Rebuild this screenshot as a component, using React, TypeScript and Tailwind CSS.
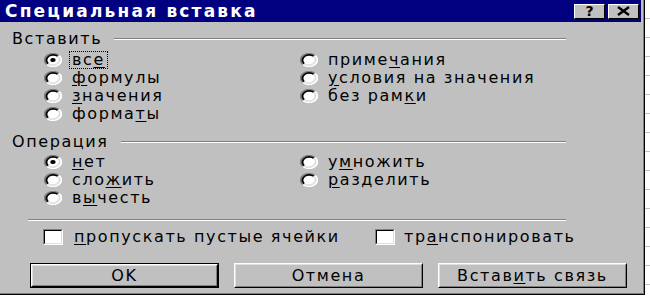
import React from "react";

const font = { fontFamily: '"DejaVu Sans", "Liberation Sans", sans-serif' };

function Radio({ checked }: { checked?: boolean }) {
  return (
    <svg width="18" height="14" viewBox="0 0 12 12" preserveAspectRatio="none" className="shrink-0">
      <circle cx="6" cy="6" r="5" fill="#fff" />
      <path d="M2.11 9.89 A5.5 5.5 0 0 1 9.89 2.11" fill="none" stroke="#808080" strokeWidth="1.3" />
      <path d="M2.82 9.18 A4.5 4.5 0 0 1 9.18 2.82" fill="none" stroke="#000" strokeWidth="1.3" />
      <path d="M9.89 2.11 A5.5 5.5 0 0 1 2.11 9.89" fill="none" stroke="#fff" strokeWidth="1.3" />
      <path d="M9.18 2.82 A4.5 4.5 0 0 1 2.82 9.18" fill="none" stroke="#dfdfdf" strokeWidth="1.3" />
      {checked && <circle cx="6" cy="6" r="1.8" fill="#000" />}
    </svg>
  );
}

function Label({ pre, key_, post, focus }: { pre: string; key_: string; post: string; focus?: boolean }) {
  return (
    <span
      className={`px-[2px] leading-[16px] border ${
        focus ? "border-dotted border-black" : "border-transparent"
      }`}
    >
      {pre}
      <u className="underline-offset-2">{key_}</u>
      {post}
    </span>
  );
}

type Opt = { pre: string; k: string; post: string; checked?: boolean; focus?: boolean };

function RadioRow({ o }: { o: Opt }) {
  return (
    <div className="h-[18px] flex items-center gap-[7px]">
      <Radio checked={o.checked} />
      <Label pre={o.pre} key_={o.k} post={o.post} focus={o.focus} />
    </div>
  );
}

function GroupHeader({ title }: { title: string }) {
  return (
    <div className="h-[16px] flex items-center pl-[12px] w-[566px]">
      <span className="leading-[16px]">{title}</span>
      <div className="flex-1 ml-[12px] border-t border-t-[#808080] border-b border-b-white" />
    </div>
  );
}

function Checkbox() {
  return (
    <div className="w-[20px] h-[16px] border-t border-l border-[#808080] border-b border-r border-b-white border-r-white shrink-0">
      <div className="w-full h-full bg-white border-t border-l border-black border-b border-r border-b-[#dfdfdf] border-r-[#dfdfdf]" />
    </div>
  );
}

function Button({ children, def }: { children: React.ReactNode; def?: boolean }) {
  return (
    <div className={`w-[189px] h-[25px] ${def ? "border border-black" : ""}`}>
      <div className="w-full h-full border-t border-l border-white border-b border-r border-b-black border-r-black">
        <div className="w-full h-full border-t border-l border-[#dfdfdf] border-b border-r border-b-[#808080] border-r-[#808080] flex items-center justify-center leading-[16px]">
          {children}
        </div>
      </div>
    </div>
  );
}

function TitleButton({ children }: { children: React.ReactNode }) {
  return (
    <div className="w-[31px] h-[15px] bg-[#c0c0c0] border-t border-l border-white border-b border-r border-b-black border-r-black flex items-center justify-center">
      {children}
    </div>
  );
}

const paste: Opt[][] = [
  [
    { pre: "вс", k: "е", post: "", checked: true, focus: true },
    { pre: "", k: "ф", post: "ормулы" },
    { pre: "", k: "з", post: "начения" },
    { pre: "форма", k: "т", post: "ы" },
  ],
  [
    { pre: "приме", k: "ч", post: "ания" },
    { pre: "", k: "у", post: "словия на значения" },
    { pre: "без рам", k: "к", post: "и" },
  ],
];

const ops: Opt[][] = [
  [
    { pre: "", k: "н", post: "ет", checked: true },
    { pre: "сло", k: "ж", post: "ить" },
    { pre: "в", k: "ы", post: "честь" },
  ],
  [
    { pre: "у", k: "м", post: "ножить" },
    { pre: "", k: "р", post: "азделить" },
  ],
];

function RadioGrid({ cols }: { cols: Opt[][] }) {
  return (
    <div className="flex pl-[44px]">
      <div className="w-[256px] flex flex-col">
        {cols[0].map((o) => (
          <RadioRow key={o.pre + o.k + o.post} o={o} />
        ))}
      </div>
      <div className="flex flex-col">
        {cols[1].map((o) => (
          <RadioRow key={o.pre + o.k + o.post} o={o} />
        ))}
      </div>
    </div>
  );
}

export default function App() {
  return (
    <div
      className="w-[650px] h-[299px] bg-white flex items-start overflow-hidden text-black text-[16px] tracking-[1.6px]"
      style={font}
    >
      {/* dialog */}
      <div className="w-[645px] h-[295px] border-r border-b border-black shrink-0">
        <div className="w-full h-full bg-[#c0c0c0] border-r border-b border-[#808080] pr-[2px] flex flex-col">
          {/* title bar */}
          <div className="h-[22px] bg-[#000080] flex items-center justify-between pr-[2px]">
            <span className="text-white font-bold text-[17px] tracking-[2.2px] pl-[5px] leading-[20px]">
              Специальная вставка
            </span>
            <div className="flex gap-[3px]">
              <TitleButton>
                <span className="font-bold text-[14px] leading-none tracking-normal">?</span>
              </TitleButton>
              <TitleButton>
                <svg width="15" height="10" viewBox="0 0 15 10">
                  <path d="M2 1 L13 9 M13 1 L2 9" stroke="#000" strokeWidth="2.4" />
                </svg>
              </TitleButton>
            </div>
          </div>

          <div className="mt-[9px]">
            <GroupHeader title="Вставить" />
          </div>
          <div className="mt-[4px]">
            <RadioGrid cols={paste} />
          </div>

          <div className="mt-[11px]">
            <GroupHeader title="Операция" />
          </div>
          <div className="mt-[3px]">
            <RadioGrid cols={ops} />
          </div>

          <div className="mt-[12px] ml-[28px] w-[538px] border-t border-t-[#808080] border-b border-b-white" />

          {/* checkboxes */}
          <div className="mt-[7px] h-[18px] flex items-center">
            <div className="pl-[43px] w-[375px] flex items-center gap-[8px]">
              <Checkbox />
              <Label pre="" key_="п" post="ропускать пустые ячейки" />
            </div>
            <div className="flex items-center gap-[6px]">
              <Checkbox />
              <Label pre="тр" key_="а" post="нспонировать" />
            </div>
          </div>

          {/* buttons */}
          <div className="mt-[17px] flex gap-[15px] pl-[30px]">
            <Button def>OK</Button>
            <Button>Отмена</Button>
            <Button>
              Встав<u className="underline-offset-2">и</u>ть связь
            </Button>
          </div>
        </div>
      </div>

      {/* worksheet strip */}
      <div className="flex-1 h-[299px] flex flex-col">
        {Array.from({ length: 16 }).map((_, i) => (
          <div key={i} className="h-[19px] border-b border-[#c0c0c0] shrink-0" />
        ))}
      </div>
    </div>
  );
}
